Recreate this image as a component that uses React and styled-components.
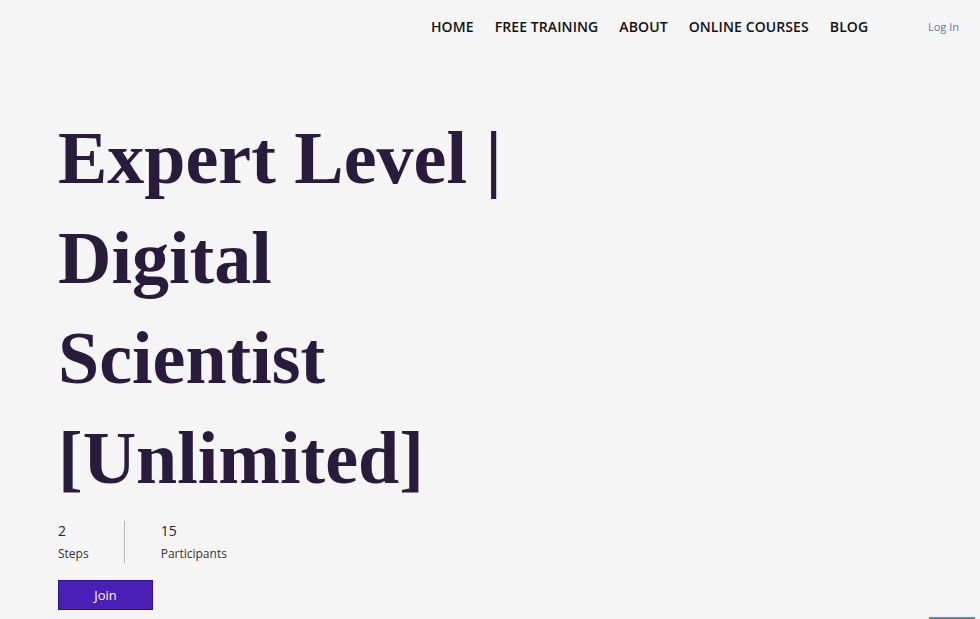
import React from 'react'
import styled, { createGlobalStyle } from 'styled-components'

const Global = createGlobalStyle`
  html, body {
    margin: 0;
    padding: 0;
    background: #f5f5f5;
  }
  body {
    font-family: 'Open Sans', 'Noto Sans', sans-serif;
    overflow: hidden;
  }
`

const Page = styled.div`
  position: relative;
  width: 980px;
  height: 619px;
  background: #f5f5f5;
  overflow: hidden;
`

const Header = styled.header`
  display: flex;
  align-items: center;
  height: 52px;
  padding: 0 21px 0 431px;
`

const Nav = styled.nav`
  display: flex;
  gap: 21px;
`

const NavLink = styled.a`
  color: #111;
  font-size: 14px;
  font-weight: 600;
  letter-spacing: 0.1px;
  text-decoration: none;
  white-space: nowrap;
`

const Spacer = styled.div`
  flex: 1;
`

const LogIn = styled.a`
  color: #5b7fa3;
  font-size: 11px;
  text-decoration: none;
`

const Hero = styled.section`
  padding: 56px 0 0 58px;
`

const Title = styled.h1`
  margin: 0;
  font-family: 'Liberation Serif', serif;
  font-weight: 700;
  font-size: 74px;
  line-height: 100px;
  color: #281b3b;
  width: 460px;
`

const Stats = styled.div`
  display: flex;
  margin-top: 13px;
`

const Stat = styled.div`
  display: flex;
  flex-direction: column;
  gap: 8px;
  padding: ${p => (p.first ? '2px 35px 0 0' : '2px 0 0 36px')};
  border-right: ${p => (p.first ? '1px solid #b5b5b5' : 'none')};
  height: 40px;
`

const Value = styled.span`
  font-size: 14px;
  color: #222;
  line-height: 16px;
`

const Label = styled.span`
  font-size: 12px;
  color: #333;
  line-height: 14px;
`

const JoinButton = styled.button`
  margin-top: 17px;
  width: 95px;
  height: 30px;
  background: #4a1fb7;
  border: 1px solid #2f149a;
  color: #fff;
  font-family: 'Open Sans', sans-serif;
  font-size: 13px;
  cursor: pointer;
`

const ChatTab = styled.div`
  position: absolute;
  right: 5px;
  bottom: 0;
  width: 46px;
  height: 2px;
  background: #5b86ad;
`

export default function App() {
  return (
    <Page>
      <Global />
      <Header>
        <Nav>
          <NavLink href="#">HOME</NavLink>
          <NavLink href="#">FREE TRAINING</NavLink>
          <NavLink href="#">ABOUT</NavLink>
          <NavLink href="#">ONLINE COURSES</NavLink>
          <NavLink href="#">BLOG</NavLink>
        </Nav>
        <Spacer />
        <LogIn href="#">Log In</LogIn>
      </Header>
      <Hero>
        <Title>Expert Level | Digital Scientist [Unlimited]</Title>
        <Stats>
          <Stat first>
            <Value>2</Value>
            <Label>Steps</Label>
          </Stat>
          <Stat>
            <Value>15</Value>
            <Label>Participants</Label>
          </Stat>
        </Stats>
        <JoinButton>Join</JoinButton>
      </Hero>
      <ChatTab />
    </Page>
  )
}
